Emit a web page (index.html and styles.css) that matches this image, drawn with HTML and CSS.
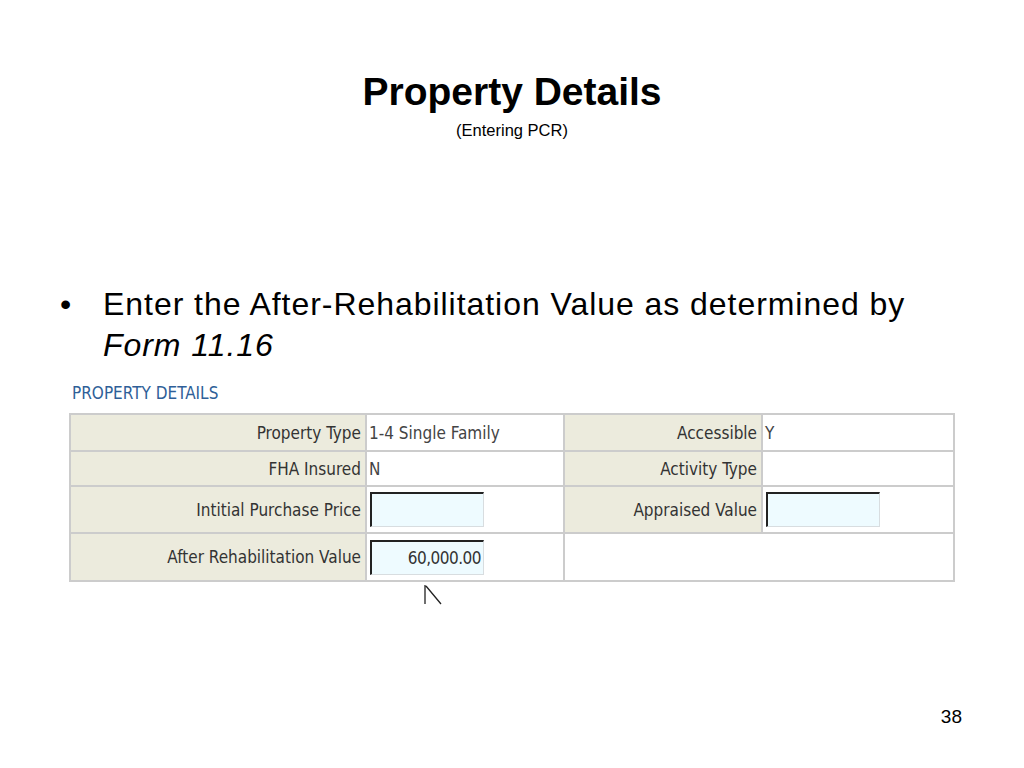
FILE: index.html
```html
<!DOCTYPE html>
<html>
<head>
<meta charset="utf-8">
<link rel="stylesheet" href="styles.css">
</head>
<body>
<div class="slide">
  <header class="head">
    <h1 class="title">Property Details</h1>
    <div class="subtitle">(Entering PCR)</div>
  </header>
  <ul class="bullets">
    <li><span class="dot">•</span><span class="btext">Enter the After-Rehabilitation Value as determined by <em>Form 11.16</em></span></li>
  </ul>
  <section class="shot">
    <div class="shot-title">PROPERTY DETAILS</div>
    <div class="grid">
      <div class="lbl r1">Property Type</div>
      <div class="val r1">1-4 Single Family</div>
      <div class="lbl r1">Accessible</div>
      <div class="val r1">Y</div>

      <div class="lbl r2">FHA Insured</div>
      <div class="val r2">N</div>
      <div class="lbl r2">Activity Type</div>
      <div class="val r2"></div>

      <div class="lbl r3">Intitial Purchase Price</div>
      <div class="val r3"><div class="input"></div></div>
      <div class="lbl r3">Appraised Value</div>
      <div class="val r3"><div class="input"></div></div>

      <div class="lbl r4">After Rehabilitation Value</div>
      <div class="val r4"><div class="input num">60,000.00</div><svg class="cursor" width="20" height="22" viewBox="0 0 20 22"><path d="M2 1 L2 20 M3 2 L18 20" stroke="#222" stroke-width="1.3" fill="none"/></svg></div>
      <div class="val r4 span2"></div>
    </div>
  </section>
  <div class="pagenum">38</div>
</div>
</body>
</html>
```
FILE: styles.css
```css
html, body {
  margin: 0;
  padding: 0;
  background: #ffffff;
}
.slide {
  width: 1024px;
  height: 768px;
  position: relative;
  font-family: "Liberation Sans", Arial, sans-serif;
  color: #000;
  overflow: hidden;
}
.head {
  padding-top: 70px;
  text-align: center;
}
.title {
  margin: 0;
  font-size: 39px;
  line-height: 44px;
  font-weight: bold;
}
.subtitle {
  font-size: 16.5px;
  line-height: 20px;
  margin-top: 6px;
}
.bullets {
  list-style: none;
  margin: 0;
  padding: 0;
  margin-top: 144px;
}
.bullets li {
  display: flex;
  padding-left: 60px;
  font-size: 32px;
  line-height: 41px;
  letter-spacing: 0.95px;
}
.dot {
  width: 43px;
  flex: none;
}
.btext {
  width: 830px;
}
.shot {
  margin-top: 17px;
  padding-left: 69px;
  position: relative;
}
.shot-title {
  font-family: "Liberation Sans Narrow", "DejaVu Sans Condensed", "Liberation Sans", sans-serif;
  color: #2f5f98;
  font-size: 17px;
  line-height: 20px;
  padding-left: 3px;
  margin-bottom: 10px;
}
.grid {
  display: grid;
  grid-template-columns: 294px 196px 196px 190px;
  grid-template-rows: 35px 33px 45px 46px;
  gap: 2px;
  padding: 2px;
  width: 886px;
  box-sizing: border-box;
  background: #cccccc;
  font-family: "Liberation Sans Narrow", "DejaVu Sans Condensed", "Liberation Sans", sans-serif;
  font-size: 17px;
  color: #333333;
}
.lbl {
  background: #ecebdd;
  display: flex;
  align-items: center;
  justify-content: flex-end;
  padding-right: 4px;
}
.val {
  background: #ffffff;
  display: flex;
  align-items: center;
  padding-left: 2px;
  position: relative;
  color: #444;
}
.span2 {
  grid-column: span 2;
}
.input {
  width: 114px;
  height: 35px;
  box-sizing: border-box;
  background: #eefbff;
  border-top: 2px solid #222;
  border-left: 2px solid #222;
  border-right: 1px solid #d8dde0;
  border-bottom: 1px solid #d8dde0;
  margin-left: 1px;
}
.num {
  display: flex;
  align-items: center;
  justify-content: flex-end;
  padding-right: 2px;
  font-size: 17px;
  letter-spacing: -0.5px;
  color: #333;
}
.cursor {
  position: absolute;
  left: 56px;
  top: 50px;
}
.pagenum {
  position: absolute;
  right: 62px;
  top: 706px;
  font-size: 19px;
}
```
